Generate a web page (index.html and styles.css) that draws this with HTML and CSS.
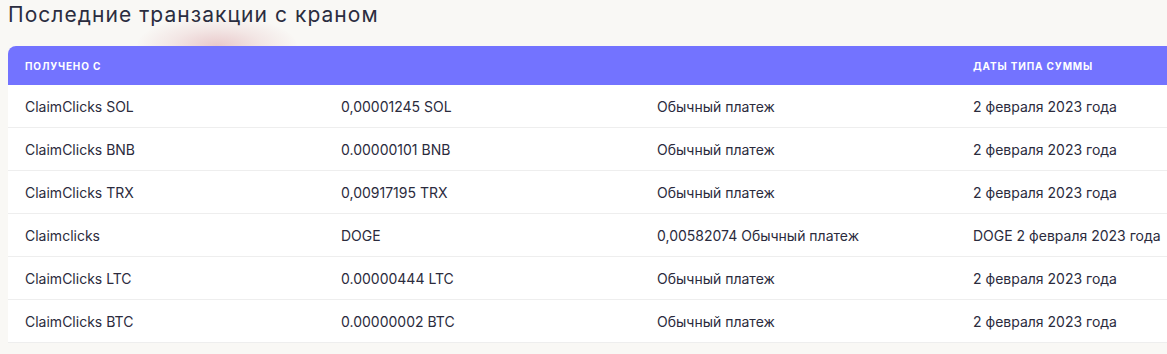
FILE: index.html
```html
<!DOCTYPE html>
<html lang="ru">
<head>
<meta charset="utf-8">
<link rel="stylesheet" href="styles.css">
</head>
<body>
<div class="page">
  <div class="glow"></div>
  <h2 class="title">Последние транзакции с краном</h2>
  <table class="tx">
    <thead>
      <tr><th>получено с</th><th></th><th></th><th>даты типа суммы</th></tr>
    </thead>
    <tbody>
      <tr><td>ClaimClicks SOL</td><td>0,00001245 SOL</td><td>Обычный платеж</td><td>2 февраля 2023 года</td></tr>
      <tr><td>ClaimClicks BNB</td><td>0.00000101 BNB</td><td>Обычный платеж</td><td>2 февраля 2023 года</td></tr>
      <tr><td>ClaimClicks TRX</td><td>0,00917195 TRX</td><td>Обычный платеж</td><td>2 февраля 2023 года</td></tr>
      <tr><td>Claimclicks</td><td>DOGE</td><td>0,00582074 Обычный платеж</td><td>DOGE 2 февраля 2023 года</td></tr>
      <tr><td>ClaimClicks LTC</td><td>0.00000444 LTC</td><td>Обычный платеж</td><td>2 февраля 2023 года</td></tr>
      <tr><td>ClaimClicks BTC</td><td>0.00000002 BTC</td><td>Обычный платеж</td><td>2 февраля 2023 года</td></tr>
    </tbody>
  </table>
</div>
</body>
</html>
```
FILE: styles.css
```css
html, body {
  margin: 0;
  padding: 0;
  background: #f9f8f5;
}
body {
  width: 1167px;
  height: 354px;
  overflow: hidden;
  font-family: Inter, "Noto Sans", sans-serif;
  color: #2b2b3d;
}
.page {
  position: relative;
  padding: 0 0 0 8px;
}
.glow {
  position: absolute;
  left: 137px;
  top: 16px;
  width: 160px;
  height: 60px;
  border-radius: 50%;
  background: radial-gradient(ellipse at center, rgba(222, 170, 175, 0.6) 0%, rgba(228, 190, 192, 0.3) 40%, rgba(249, 248, 245, 0) 72%);
  pointer-events: none;
}
.title {
  position: relative;
  margin: 0;
  padding: 1px 0 0 0;
  height: 46px;
  box-sizing: border-box;
  font-size: 21px;
  line-height: 28px;
  font-weight: 400;
  letter-spacing: 1.05px;
  color: #2b2d40;
}
.tx {
  position: relative;
  width: 1264px;
  table-layout: fixed;
  border-collapse: separate;
  border-spacing: 0;
  background: #ffffff;
  border-radius: 8px 0 0 0;
}
.tx th {
  background: #7373ff;
  color: #ffffff;
  height: 39px;
  padding: 0 0 0 17px;
  text-align: left;
  font-size: 10px;
  font-weight: 700;
  letter-spacing: 0.85px;
  text-transform: uppercase;
}
.tx th:first-child {
  border-top-left-radius: 8px;
}
.tx td {
  height: 42px;
  padding: 0 0 0 17px;
  font-size: 14px;
  border-bottom: 1px solid #eeeeee;
  white-space: nowrap;
  color: #2b2b3d;
}
```
